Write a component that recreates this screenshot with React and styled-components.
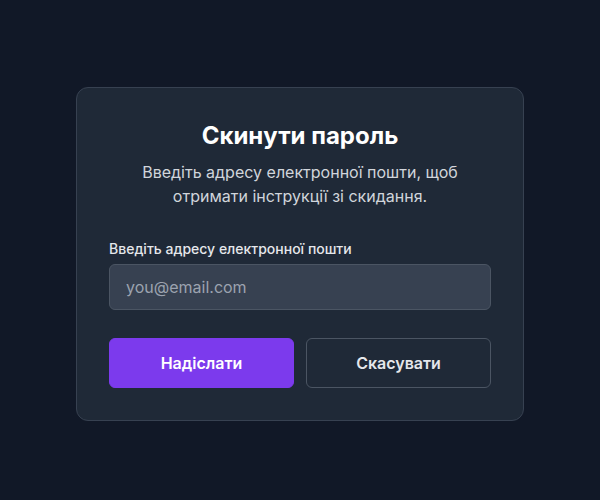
import React from "react";
import styled, {createGlobalStyle} from "styled-components";

const GlobalStyle = createGlobalStyle`
    html, body {
        margin: 0;
        padding: 0;
        background-color: #111827;
        font-family: Inter, "Noto Sans", sans-serif;
    }
    * {
        box-sizing: border-box;
    }
`;

const Page = styled.div`
    min-height: 500px;
    display: flex;
    justify-content: center;
    align-items: center;
    padding-top: 8px;
`;

const Card = styled.form`
    width: 448px;
    background-color: #1f2937;
    border: 1px solid #374151;
    border-radius: 12px;
    padding: 32px;
    display: flex;
    flex-direction: column;
`;

const Title = styled.h1`
    margin: 0;
    color: #ffffff;
    font-size: 24px;
    line-height: 32px;
    font-weight: 700;
    text-align: center;
`;

const Subtitle = styled.p`
    margin: 8px 0 0;
    color: #d1d5db;
    font-size: 16px;
    line-height: 24px;
    text-align: center;
`;

const Label = styled.label`
    margin-top: 31px;
    color: #e5e7eb;
    font-size: 14px;
    line-height: 20px;
    font-weight: 500;
`;

const Input = styled.input`
    margin-top: 5px;
    width: 100%;
    height: 46px;
    padding: 0 16px;
    background-color: #374151;
    border: 1px solid #4b5563;
    border-radius: 6px;
    color: #f3f4f6;
    font-family: inherit;
    font-size: 16px;
    outline: none;

    &::placeholder {
        color: #9ca3af;
    }
`;

const Actions = styled.div`
    margin-top: 28px;
    display: grid;
    grid-template-columns: 1fr 1fr;
    gap: 12px;
`;

const Button = styled.button`
    height: 50px;
    border-radius: 6px;
    font-family: inherit;
    font-size: 16px;
    font-weight: 600;
    cursor: pointer;
    border: 1px solid ${p => p.$primary ? "#7c3aed" : "#4b5563"};
    background-color: ${p => p.$primary ? "#7c3aed" : "transparent"};
    color: ${p => p.$primary ? "#ffffff" : "#e5e7eb"};
`;

export default function App() {
    return (
        <>
            <GlobalStyle/>
            <Page>
                <Card onSubmit={e => e.preventDefault()}>
                    <Title>Скинути пароль</Title>
                    <Subtitle>Введіть адресу електронної пошти, щоб отримати інструкції зі скидання.</Subtitle>
                    <Label htmlFor="email">Введіть адресу електронної пошти</Label>
                    <Input id="email" type="email" placeholder="you@email.com"/>
                    <Actions>
                        <Button type="submit" $primary>Надіслати</Button>
                        <Button type="button">Скасувати</Button>
                    </Actions>
                </Card>
            </Page>
        </>
    );
}
